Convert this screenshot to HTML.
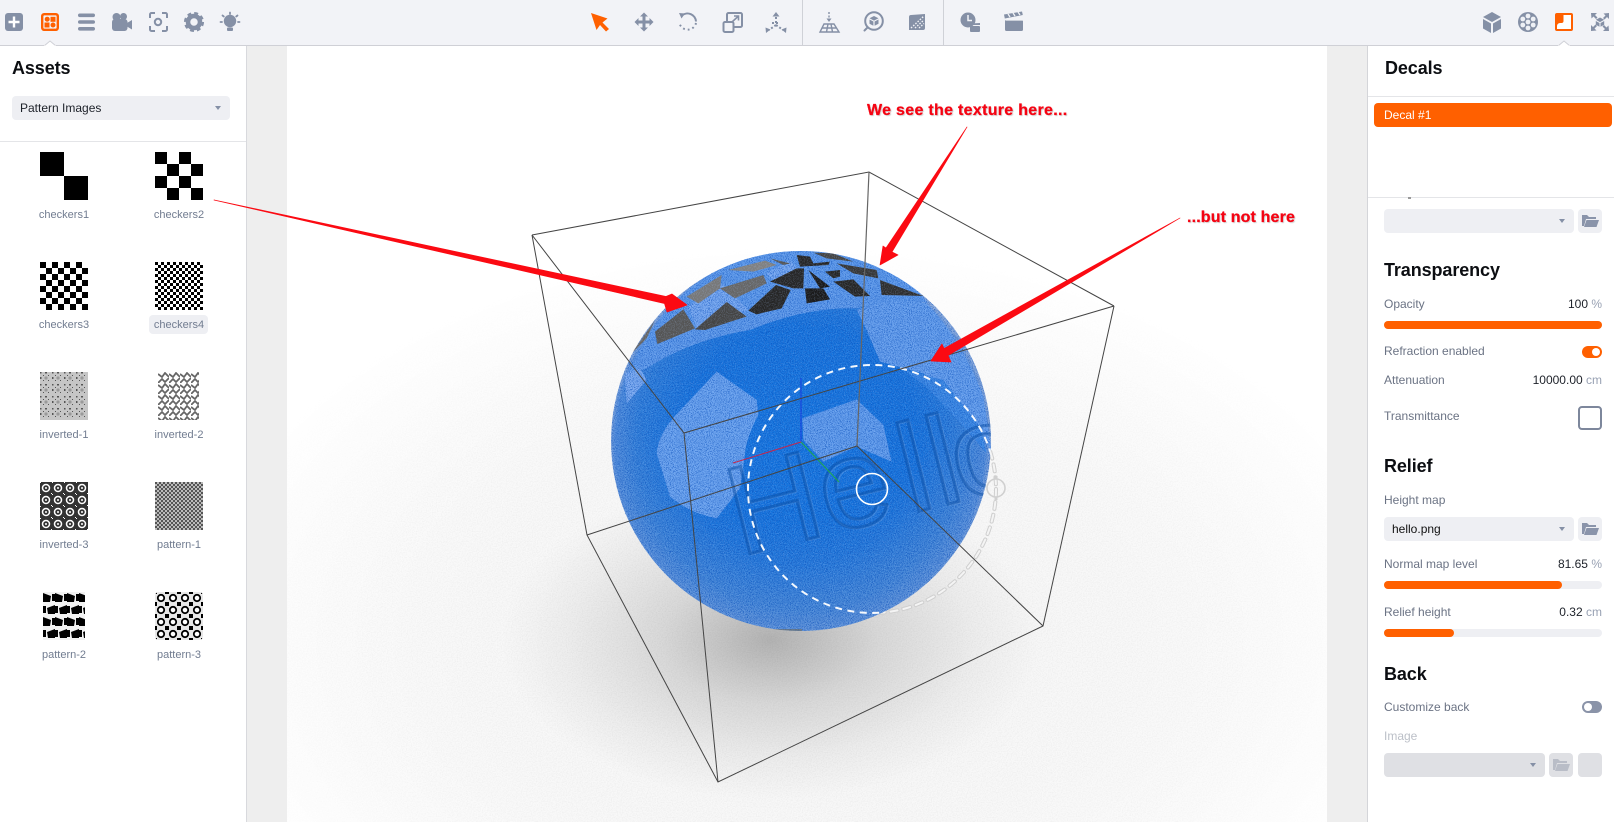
<!DOCTYPE html>
<html><head><meta charset="utf-8"><title>Decals</title>
<style>
html,body{margin:0;padding:0;background:#fff}
body{width:1614px;height:822px;overflow:hidden;position:relative;font-family:"Liberation Sans",sans-serif;font-size:12px;color:#6b7384}
.abs,.t,.h,.sel,.btn,.bar,.fill,.lbl{position:absolute}
.t{line-height:16px;white-space:nowrap}
.r{text-align:right}
.r i{font-style:normal;color:#98a1b3}
.r{color:#1d2129}
.h{font-weight:bold;font-size:18px;line-height:22px;color:#0c0e12;white-space:nowrap;letter-spacing:-.1px}
.sel{background:#eeeff3;border-radius:4px;height:24px}
.sel:after{content:"";position:absolute;right:9px;top:10px;border:3px solid transparent;border-top:4px solid #8590a6;border-bottom:0}
.btn{background:#eeeff3;border-radius:4px;width:24px;height:24px}
.btn svg{position:absolute;left:3px;top:4px}
.bar{left:1384px;width:218px;height:8px;background:#eeeff3;border-radius:4px}
.fill{left:0;top:0;height:8px;background:#ff6000;border-radius:4px}
.lbl{width:110px;text-align:center;font-size:11px;line-height:16px;color:#717c90}
.thumb{position:absolute}
.ann{position:absolute;color:#f50312;font-weight:bold;font-size:16px;line-height:18px;white-space:nowrap;text-shadow:1px 1px 1px #ccc;-webkit-text-stroke:.25px #f50312}
</style></head><body>

<!-- viewport -->
<svg class="abs" style="left:0;top:0" width="1614" height="822" viewBox="0 0 1614 822">
<defs>
<filter id="gb" x="0" y="0" width="1" height="1" color-interpolation-filters="sRGB"><feTurbulence type="fractalNoise" baseFrequency="1.05" numOctaves="2" seed="4"/><feColorMatrix values="0 0 0 0 .03 0 0 0 0 .30 0 0 0 0 .72 6 0 0 0 -2.9"/></filter>
<filter id="gw" x="0" y="0" width="1" height="1" color-interpolation-filters="sRGB"><feTurbulence type="fractalNoise" baseFrequency=".9" numOctaves="2" seed="9"/><feColorMatrix values="0 0 0 0 .7 0 0 0 0 .82 0 0 0 0 1 0 5 0 0 -2.4"/></filter>
<filter id="gg" x="0" y="0" width="1" height="1" color-interpolation-filters="sRGB"><feTurbulence type="fractalNoise" baseFrequency=".8" numOctaves="2" seed="2"/><feColorMatrix values="0 0 0 0 .3 0 0 0 0 .3 0 0 0 0 .3 1.6 0 0 0 -.6"/></filter>
<clipPath id="sph"><circle cx="801" cy="441" r="190"/></clipPath>
<clipPath id="outs"><path clip-rule="evenodd" d="M287 45H1327V822H287ZM611 441a190 190 0 1 0 380 0a190 190 0 1 0 -380 0Z"/></clipPath>
<clipPath id="cv"><rect x="287" y="45" width="1040" height="777"/></clipPath>
<radialGradient id="sb" gradientUnits="userSpaceOnUse" cx="800" cy="445" r="191"><stop offset="0" stop-color="#1476e0"/><stop offset=".62" stop-color="#1673dc"/><stop offset=".86" stop-color="#2f7ed9"/><stop offset=".97" stop-color="#4d8bdc"/><stop offset="1" stop-color="#8aa9da"/></radialGradient>
<radialGradient id="sl" gradientUnits="userSpaceOnUse" cx="790" cy="360" r="290"><stop offset=".55" stop-color="#7a9bd0" stop-opacity="0"/><stop offset="1" stop-color="#7a9bd0" stop-opacity=".45"/></radialGradient>
<radialGradient id="sh1" gradientUnits="userSpaceOnUse" cx="0" cy="0" r="1" gradientTransform="translate(770 640) scale(270 160)"><stop offset="0" stop-color="#000" stop-opacity=".27"/><stop offset=".4" stop-color="#000" stop-opacity=".12"/><stop offset=".75" stop-color="#000" stop-opacity=".04"/><stop offset="1" stop-color="#000" stop-opacity="0"/></radialGradient>
<radialGradient id="sh2" gradientUnits="userSpaceOnUse" cx="0" cy="0" r="1" gradientTransform="translate(800 640) scale(620 400)"><stop offset="0" stop-color="#000" stop-opacity=".04"/><stop offset=".6" stop-color="#000" stop-opacity=".025"/><stop offset="1" stop-color="#000" stop-opacity="0"/></radialGradient>
<radialGradient id="mr" gradientUnits="userSpaceOnUse" cx="0" cy="0" r="1" gradientTransform="translate(800 640) scale(620 400)"><stop offset="0" stop-color="#fff"/><stop offset=".7" stop-color="#999"/><stop offset="1" stop-color="#000"/></radialGradient>
<mask id="gm" maskUnits="userSpaceOnUse" x="287" y="45" width="1040" height="777"><rect x="287" y="45" width="1040" height="777" fill="url(#mr)"/></mask>
</defs>
<rect x="247" y="45" width="40" height="777" fill="#eeeeee"/>
<rect x="1327" y="45" width="41" height="777" fill="#eeeeee"/>
<g clip-path="url(#cv)">
<rect x="287" y="45" width="1040" height="777" fill="#fff"/>
<rect x="287" y="45" width="1040" height="777" fill="url(#sh2)"/>
<ellipse cx="770" cy="640" rx="270" ry="160" fill="url(#sh1)"/>
<g mask="url(#gm)"><rect x="287" y="45" width="1040" height="777" filter="url(#gg)" opacity=".1"/></g>
</g>

<!-- sphere -->
<g clip-path="url(#sph)">
<circle cx="801" cy="441" r="190" fill="url(#sb)"/>
<circle cx="801" cy="441" r="190" fill="url(#sl)"/>
<g transform="translate(590 240) scale(.33333)">
<path fill="#5f9aea" d="M90 470Q110 395 170 385Q300 300 480 270Q650 200 800 205Q950 170 1015 190Q880 25 632 30Q230 45 90 470Z"/>
<path fill="#7caaf0" d="M105 400L150 385 170 420 110 490Z"/>
<path fill="#6aa2ee" d="M200 640Q205 580 262 520L380 395 500 480 505 525Q470 590 465 640L450 745 380 835Q300 820 240 770Z"/>
<path fill="#639dec" d="M637 535L800 478 880 555 905 665 800 620 700 665 640 600Z"/>
<path fill="#659eec" d="M800 210Q900 165 1010 190Q1110 290 1180 470L1205 640Q1150 500 1000 400L870 365 830 270Z"/>
<path fill="#3a88e4" d="M940 390L1060 420 1170 560 1190 640 1130 570 1010 440Z"/>
<path fill="#78a8f0" d="M295 200L395 130 475 210 320 265ZM530 100L600 60 630 95 560 130Z"/>
</g>
<rect x="610" y="250" width="384" height="384" filter="url(#gb)" opacity=".6"/>
<g transform="translate(580 220) scale(.33333)">
<path fill="#555" d="M225 335L310 268 345 325 232 372Z"/>
<path fill="#444" d="M345 328L440 246 500 290 480 296 375 330Z"/>
<path fill="#262626" d="M505 272L588 195 632 210 605 265 530 283Z"/>
<path fill="#1a1a1a" d="M675 205L730 205 750 238 680 250Z"/>
<path fill="#262626" d="M760 185L820 178 870 228 825 230Z"/>
<path fill="#2e2e2e" d="M900 180L1030 228 905 225Z"/>
<path fill="#363636" d="M770 130L890 150 895 175 820 160Z"/>
<path fill="#262626" d="M650 145L672 145 670 205 640 205 570 185Z"/>
<path fill="#666" d="M420 205L550 165 560 190 465 235Z"/>
<path fill="#777" d="M320 230L425 165 420 205 355 250Z"/>
<path fill="#808080" d="M445 150L555 122 590 135 520 155Z"/>
<path fill="#262626" d="M650 105L690 110 700 130 750 125 745 135 660 140Z"/>
<path fill="#1a1a1a" d="M685 150L750 200 720 205Z"/>
<path fill="#262626" d="M735 155L780 150 780 170 760 175Z"/>
<path fill="#555" d="M570 115L630 130 610 135Z"/>
<path fill="#444" d="M700 98L760 100 820 125 740 115Z"/>
<path fill="#666" d="M155 400L225 300 200 355Z"/>
</g>
<rect x="610" y="250" width="384" height="384" filter="url(#gw)" opacity=".22"/>
<g transform="translate(740 556) rotate(-14)" font-family="Liberation Sans" font-size="126">
<text x="1.500 93.500 177.500 207.500 229.500" y="1.500" fill="none" stroke="#a9c8f2" stroke-width="1.600" opacity=".2">Hello</text>
<text x="0 92 176 206 228" y="0" fill="none" stroke="#0a4fa6" stroke-width="3.200" opacity=".5">Hello</text>
</g>
<path fill="#6e6a5e" d="M750 629h52v2h-52z" opacity=".6"/>
</g>

<!-- dashed ring -->
<g fill="none">
<g clip-path="url(#outs)">
<circle cx="872" cy="489" r="124" stroke="#cfcfcf" stroke-width="4" stroke-dasharray="7 6" stroke-linecap="round"/>
<circle cx="872" cy="489" r="124" stroke="#f4f4f4" stroke-width="2" stroke-dasharray="7 6" stroke-linecap="round"/>
<circle cx="996" cy="488" r="9" stroke="#d0d0d0" stroke-width="1.6"/>
<path d="M996 476v3M996 497v3" stroke="#d0d0d0" stroke-width="3"/>
</g>
<g clip-path="url(#sph)">
<circle cx="872" cy="489" r="124" stroke="#fff" stroke-width="2" stroke-dasharray="7 5.5" opacity=".95"/>
</g>
<circle cx="872" cy="489" r="15.5" stroke="#fff" stroke-width="1.6"/>
<path d="M801 442V378" stroke="#1a3fe0" stroke-width="1"/>
<path d="M801 442L733 463" stroke="#c2274d" stroke-width="1"/>
<path d="M801 442L839 482" stroke="#1fa84f" stroke-width="1"/>
</g>

<!-- bounding box -->
<g fill="none" stroke="#444" stroke-width="1">
<path d="M532 235L869 172 1114 306"/>
<path d="M532 235L684 433 1114 306"/>
<path d="M532 235L587 535 718 782 1043 626 1114 306"/>
<path d="M684 433L718 782"/>
<path d="M869 172L857 446" stroke="#666" stroke-width="1.2"/>
<path d="M587 535L857 446 1043 626"/>
</g>
</svg>

<!-- top toolbar -->
<div class="abs" style="left:0;top:0;width:1614px;height:45px;background:#f2f3f7;border-bottom:1px solid #cfd0d6"></div>
<div class="abs" style="left:802px;top:0;width:1px;height:45px;background:#cfd1d7"></div>
<div class="abs" style="left:943px;top:0;width:1px;height:45px;background:#cfd1d7"></div>

<!-- left panel -->
<div class="abs" style="left:0;top:46px;width:246px;height:776px;background:#fff;border-right:1px solid #d8d9dd"></div>
<div class="abs" style="left:0;top:141px;width:246px;height:1px;background:#e4e5e8"></div>
<div class="h" style="left:12px;top:57px">Assets</div>
<div class="sel" style="left:12px;top:96px;width:218px"><span class="t" style="left:8px;top:4px;color:#1d2129">Pattern Images</span></div>

<!-- right panel -->
<div class="abs" style="left:1367px;top:46px;width:247px;height:776px;background:#fff;border-left:1px solid #d4d5d9"></div>
<div class="abs" style="left:1368px;top:96px;width:246px;height:1px;background:#e4e5e8"></div>
<div class="abs" style="left:1368px;top:197px;width:246px;height:1px;background:#e4e5e8"></div>
<div class="abs" style="left:1408px;top:197px;width:3px;height:2px;background:#999"></div>
<div class="h" style="left:1385px;top:57px">Decals</div>
<div class="abs" style="left:1374px;top:103px;width:238px;height:24px;background:#ff6000;border-radius:4px"></div>
<div class="t" style="left:1384px;top:107px;color:#fff">Decal #1</div>

<div class="sel" style="left:1384px;top:209px;width:190px"></div>
<div class="btn" style="left:1578px;top:209px"><svg width="18" height="16" viewBox="0 0 18 16"><path fill="#8a94aa" d="M1 2h5l2 2h7v2H5L3 13H1zM5.500 7H18l-2.500 7H3z"/></svg></div>

<div class="h" style="left:1384px;top:259px">Transparency</div>
<div class="t" style="left:1384px;top:296px">Opacity</div>
<div class="t r" style="right:12px;top:296px">100 <i>%</i></div>
<div class="bar" style="top:321px"><div class="fill" style="width:218px"></div></div>
<div class="t" style="left:1384px;top:343px">Refraction enabled</div>
<div class="abs" style="left:1582px;top:346px;width:20px;height:12px;border-radius:6px;background:#ff6000"></div>
<div class="abs" style="left:1592px;top:348px;width:8px;height:8px;border-radius:4px;background:#fff"></div>
<div class="t" style="left:1384px;top:372px">Attenuation</div>
<div class="t r" style="right:12px;top:372px">10000.00 <i>cm</i></div>
<div class="t" style="left:1384px;top:408px">Transmittance</div>
<div class="abs" style="left:1578px;top:406px;width:20px;height:20px;border:2px solid #7d879c;border-radius:4px"></div>

<div class="h" style="left:1384px;top:455px">Relief</div>
<div class="t" style="left:1384px;top:492px">Height map</div>
<div class="sel" style="left:1384px;top:517px;width:190px"><span class="t" style="left:8px;top:4px;color:#111">hello.png</span></div>
<div class="btn" style="left:1578px;top:517px"><svg width="18" height="16" viewBox="0 0 18 16"><path fill="#8a94aa" d="M1 2h5l2 2h7v2H5L3 13H1zM5.500 7H18l-2.500 7H3z"/></svg></div>
<div class="t" style="left:1384px;top:556px">Normal map level</div>
<div class="t r" style="right:12px;top:556px">81.65 <i>%</i></div>
<div class="bar" style="top:581px"><div class="fill" style="width:178px"></div></div>
<div class="t" style="left:1384px;top:604px">Relief height</div>
<div class="t r" style="right:12px;top:604px">0.32 <i>cm</i></div>
<div class="bar" style="top:629px"><div class="fill" style="width:70px"></div></div>

<div class="h" style="left:1384px;top:663px">Back</div>
<div class="t" style="left:1384px;top:699px">Customize back</div>
<div class="abs" style="left:1582px;top:701px;width:20px;height:12px;border-radius:6px;background:#8a93a8"></div>
<div class="abs" style="left:1584px;top:703px;width:8px;height:8px;border-radius:4px;background:#fff"></div>
<div class="t" style="left:1384px;top:728px;color:#bcc0c8">Image</div>
<div class="sel" style="left:1384px;top:753px;width:161px;background:#dfe0e4"></div>
<div class="btn" style="left:1549px;top:753px;background:#dfe0e4"><svg width="18" height="16" viewBox="0 0 18 16"><path fill="#b9bdc7" d="M1 2h5l2 2h7v2H5L3 13H1zM5.500 7H18l-2.500 7H3z"/></svg></div>
<div class="btn" style="left:1578px;top:753px;background:#dfe0e4"></div>

<!-- asset thumbs -->
<svg class="thumb" style="left:0;top:140px" width="246" height="520" viewBox="0 140 246 520">
<defs>
<pattern id="c2" width="24" height="24" patternUnits="userSpaceOnUse" x="155" y="152"><path d="M0 0h12v12H0zM12 12h12v12H12z"/></pattern>
<pattern id="c3" width="12" height="12" patternUnits="userSpaceOnUse" x="40" y="262"><path d="M0 0h6v6H0zM6 6h6v6H6z"/></pattern>
<pattern id="c4" width="6" height="6" patternUnits="userSpaceOnUse" x="155" y="262"><path d="M0 0h3v3H0zM3 3h3v3H3z"/></pattern>
<pattern id="i1" width="12" height="12" patternUnits="userSpaceOnUse" x="40" y="372"><rect width="12" height="12" fill="#c6c6c6"/><path fill="#555" d="M0 0h1.500v1.500H0zM5 0h2v1.500H5zM0 5h1.500v2H0zM3 3h1v1H3zM8 3h1v1H8zM3 8h1v1H3zM8 8h1v1H8z"/><circle cx="6" cy="6" r="1.600" fill="#9a9a9a"/></pattern>
<pattern id="i2" width="11" height="11" patternUnits="userSpaceOnUse" x="158" y="372"><rect width="11" height="11" fill="#fff"/><path fill="none" stroke="#666" stroke-width="1.800" d="M0 2L4 5 7 1 11 5M0 11L4 7 7 10 11 6"/></pattern>
<pattern id="i3" width="12" height="12" patternUnits="userSpaceOnUse" x="40" y="482"><rect width="12" height="12" fill="#333"/><circle cx="6" cy="6" r="3.500" fill="none" stroke="#fff" stroke-width="1.500"/><circle cx="6" cy="6" r="1" fill="#fff"/><path fill="#fff" d="M0 0h1v1H0zM11 11h1v1h-1z"/></pattern>
<pattern id="p1" width="4" height="4" patternUnits="userSpaceOnUse" x="155" y="482"><rect width="4" height="4" fill="#bbb"/><path fill="#555" d="M0 0h2v2H0zM2 2h2v2H2z"/></pattern>
<pattern id="p2" width="12" height="24" patternUnits="userSpaceOnUse" x="43" y="592"><rect width="12" height="24" fill="#f2f2f2"/><path d="M0 1l8 3-1 6H0zM9 2h3v7H9zM12 13L4 16l1 6h7zM0 14h3v7H0z"/></pattern>
<pattern id="p3" width="12" height="12" patternUnits="userSpaceOnUse" x="155" y="592"><rect width="12" height="12" fill="#e8e8e8"/><circle cx="6" cy="6" r="3.200" fill="#fff" stroke="#000" stroke-width="1.800"/><path d="M0 0h2v2H0zM10 0h2v2h-2zM0 10h2v2H0zM10 10h2v2h-2z"/></pattern>
</defs>
<path d="M40 152h24v24H40zM64 176h24v24H64z"/>
<rect x="155" y="152" width="48" height="48" fill="url(#c2)"/>
<rect x="40" y="262" width="48" height="48" fill="url(#c3)"/>
<rect x="155" y="262" width="48" height="48" fill="url(#c4)"/>
<rect x="40" y="372" width="48" height="48" fill="url(#i1)"/>
<rect x="158" y="372" width="41" height="48" fill="url(#i2)"/>
<rect x="40" y="482" width="48" height="48" fill="url(#i3)"/>
<rect x="155" y="482" width="48" height="48" fill="url(#p1)"/>
<rect x="43" y="592" width="42" height="48" fill="url(#p2)"/>
<rect x="155" y="592" width="48" height="48" rx="4" fill="url(#p3)"/>
</svg>
<div class="abs" style="left:149px;top:315px;width:59px;height:19px;background:#eeeff3;border-radius:4px"></div>
<div class="lbl" style="left:9px;top:207px">checkers1</div><div class="lbl" style="left:124px;top:207px">checkers2</div>
<div class="lbl" style="left:9px;top:317px">checkers3</div><div class="lbl" style="left:124px;top:317px">checkers4</div>
<div class="lbl" style="left:9px;top:427px">inverted-1</div><div class="lbl" style="left:124px;top:427px">inverted-2</div>
<div class="lbl" style="left:9px;top:537px">inverted-3</div><div class="lbl" style="left:124px;top:537px">pattern-1</div>
<div class="lbl" style="left:9px;top:647px">pattern-2</div><div class="lbl" style="left:124px;top:647px">pattern-3</div>

<!-- toolbar icons + arrows overlay -->
<svg class="abs" style="left:0;top:0" width="1614" height="822" viewBox="0 0 1614 822">
<g fill="#8590a6">
<!-- plus -->
<rect x="5" y="13" width="18" height="18" rx="3"/>
<path fill="#fff" d="M12.800 16.500h2.400v4.300h4.300v2.400h-4.300v4.300h-2.400v-4.300H8.500v-2.400h4.300z"/>
<!-- assets -->
<rect x="42.200" y="14.200" width="15.600" height="15.600" rx="2" fill="none" stroke="#ff6000" stroke-width="2.400"/>
<g fill="#ff6000"><circle cx="47.200" cy="19.200" r="2.500"/><rect x="50.500" y="16.800" width="5" height="5"/><rect x="44.500" y="22.500" width="5" height="5"/><circle cx="53" cy="25" r="2.500"/></g>
<path fill="#fff" stroke="#cfd0d6" d="M44 46l6-5 6 5"/><rect x="44" y="45.500" width="12" height="2" fill="#fff"/>
<!-- list -->
<rect x="78" y="13.500" width="17" height="3.600" rx="1.800"/><rect x="78" y="20.200" width="17" height="3.600" rx="1.800"/><rect x="78" y="27" width="17" height="3.600" rx="1.800"/>
<!-- camera -->
<circle cx="116.500" cy="17" r="4"/><circle cx="123.500" cy="16.500" r="3.500"/><rect x="112" y="19" width="15.500" height="12" rx="3"/><path d="M127 23l5-3v9.500l-5-3z"/>
<!-- focus -->
<path fill="none" stroke="#8590a6" stroke-width="2" d="M150 18v-3.500a1.500 1.500 0 0 1 1.500-1.500H155M162 13h3.500a1.500 1.500 0 0 1 1.500 1.500V18M167 26v3.500a1.500 1.500 0 0 1-1.500 1.500H162M155 31h-3.500a1.500 1.500 0 0 1-1.500-1.500V26"/>
<circle cx="158" cy="22" r="3.200" fill="none" stroke="#8590a6" stroke-width="2"/>
<!-- gear -->
<circle cx="194" cy="22" r="6" fill="none" stroke="#8590a6" stroke-width="4.500"/>
<circle cx="194" cy="22" r="8.800" fill="none" stroke="#8590a6" stroke-width="2.500" stroke-dasharray="3.900 3"/>
<!-- light -->
<circle cx="230" cy="21" r="6.200"/><rect x="227" y="27.500" width="6" height="3.500" rx="1"/>
<path fill="none" stroke="#8590a6" stroke-width="1.800" stroke-linecap="round" d="M230 12.500v1.500M222.500 15.500l1.300 1M237.500 15.500l-1.300 1M220.500 22h1.500M238 22h1.500"/>

<!-- select arrow -->
<path fill="#ff6000" d="M591 13l16.500 5.500-5 4 6.500 6.500-3 2.500-6-6.500-3.500 5z"/>
<!-- move -->
<path d="M644 12.500l4 4h-2.500v4h4v-2.500l4 4-4 4v-2.500h-4v4h2.500l-4 4-4-4h2.500v-4h-4v2.500l-4-4 4-4v2.500h4v-4H640z"/>
<!-- rotate -->
<path fill="none" stroke="#8590a6" stroke-width="2" d="M682 15.500a8.500 8.500 0 0 1 14 6"/>
<path d="M679 13l6 .5-3.500 5z"/>
<path fill="none" stroke="#8590a6" stroke-width="2" stroke-dasharray="1.800 3" d="M696 23a8.500 8.500 0 0 1-16.300 1"/>
<!-- scale -->
<rect x="727" y="13" width="15" height="14" rx="1.500" fill="none" stroke="#8590a6" stroke-width="2"/>
<rect x="723.500" y="22" width="10" height="10" rx="1.500" fill="#f2f3f7" stroke="#8590a6" stroke-width="2"/>
<path fill="none" stroke="#8590a6" stroke-width="1.600" d="M732 22l6-5.500M734 16h4.500v4.500"/>
<!-- axes -->
<path d="M776 12l3.500 4.500h-7z"/><path d="M766 33l-.5-5.500 5 2zM786 33l.5-5.500-5 2z"/>
<path fill="none" stroke="#8590a6" stroke-width="2" stroke-dasharray="2 2" d="M776 17v8M776 25l-7 5M776 25l7 5M772 23h8"/>
<!-- ground -->
<path fill="none" stroke="#8590a6" stroke-width="1.400" d="M824 24h10l5 8h-19zM828 24l-1.500 8M831 24l1.500 8M821.500 28h15"/>
<path fill="none" stroke="#8590a6" stroke-width="1.400" stroke-dasharray="2 1.500" d="M829 12v7"/><path d="M826.500 18.500h5l-2.500 3.500z"/>
<!-- search cube -->
<circle cx="874" cy="21" r="8.800" fill="none" stroke="#8590a6" stroke-width="2"/>
<path stroke="#8590a6" stroke-width="2" stroke-linecap="round" d="M867.500 27.500l-3 3"/>
<path d="M874 16l4.500 2.300-4.500 2.300-4.500-2.300zM869.500 19.500l3.900 2v4.300l-3.900-2zM878.500 19.500l-3.900 2v4.300l3.900-2z"/>
<!-- bake -->
<path d="M911 15l14-1v14a2 2 0 0 1-2 2h-14V17a2 2 0 0 1 2-2z"/>
<path fill="none" stroke="#f2f3f7" stroke-width="1.400" stroke-dasharray="1.500 1.500" d="M911 28l13-12M915 28l9-8M919 28l5-4.500"/>
<!-- clock -->
<circle cx="968" cy="20" r="7.500"/><path stroke="#f2f3f7" stroke-width="1.500" fill="none" d="M968 15v5.500h4"/>
<rect x="970" y="26" width="10" height="6" rx="1"/><path d="M970 23.500l10-.5v2h-10z"/>
<!-- clap -->
<rect x="1005" y="20" width="18" height="11" rx="1.500"/>
<path d="M1004 14.500l18-3 .8 3.500-18 3.500z"/>
<path fill="none" stroke="#f2f3f7" stroke-width="1.300" d="M1008 14l2 3M1013 13l2 3M1018 12l2 3M1006 20h17"/>

<!-- cube -->
<path d="M1492 12l9 5-9 5-9-5zM1483 19l8 4.500v9.500l-8-4.500zM1501 19l-8 4.500v9.500l8-4.500z"/>
<!-- ball -->
<circle cx="1528" cy="22" r="10"/>
<g fill="#eef0f5"><circle cx="1528" cy="22" r="2.400"/><circle cx="1528" cy="16" r="2.400"/><circle cx="1528" cy="28" r="2.400"/><circle cx="1522.800" cy="19" r="2.400"/><circle cx="1533.200" cy="19" r="2.400"/><circle cx="1522.800" cy="25" r="2.400"/><circle cx="1533.200" cy="25" r="2.400"/></g>
<!-- decal -->
<rect x="1556" y="14" width="16" height="16" rx="1" fill="#fff" stroke="#ff6000" stroke-width="2"/>
<path fill="#ff6000" d="M1556 14h7.500v7a2 2 0 0 1-2 2h-1.500a3 3 0 0 0-3 3v2h-1z"/>
<path fill="#fff" stroke="#cfd0d6" d="M1558 46l6-5 6 5"/><rect x="1558" y="45.500" width="12" height="2" fill="#fff"/>
<!-- fit -->
<path d="M1591 13h6l-2 2 2.500 2.500-1.500 1.500-2.500-2.500-2 2zM1609 13v6l-2-2-2.500 2.500-1.500-1.500 2.500-2.500-2-2zM1591 31v-6l2 2 2.500-2.500 1.500 1.500-2.500 2.500 2 2zM1609 31h-6l2-2-2.500-2.500 1.500-1.500 2.500 2.500 2-2z"/>
<path d="M1600 17.500l4.200 2.300-4.200 2.300-4.200-2.300zM1595.800 21l3.700 2v3.700l-3.700-2zM1604.200 21l-3.700 2v3.700l3.700-2z"/>
</g>
<!-- red arrows -->
<g fill="#fb0a12" stroke="#fb0a12" stroke-width=".7" stroke-linejoin="round">
<path d="M214 200L666 296.500 672 294 687 305 667 312 664.500 303.500Z"/>
<path d="M967 127L892 252 898 255 880 265 883 246 886 248Z"/>
<path d="M1180 218L948 355.500 951 362 931 361 942 344 944 348.500Z"/>
</g>
</svg>
<div class="ann" style="left:867px;top:102px;letter-spacing:.3px">We see the texture here...</div>
<div class="ann" style="left:1187px;top:209px;letter-spacing:.15px">...but not here</div>
</body></html>
